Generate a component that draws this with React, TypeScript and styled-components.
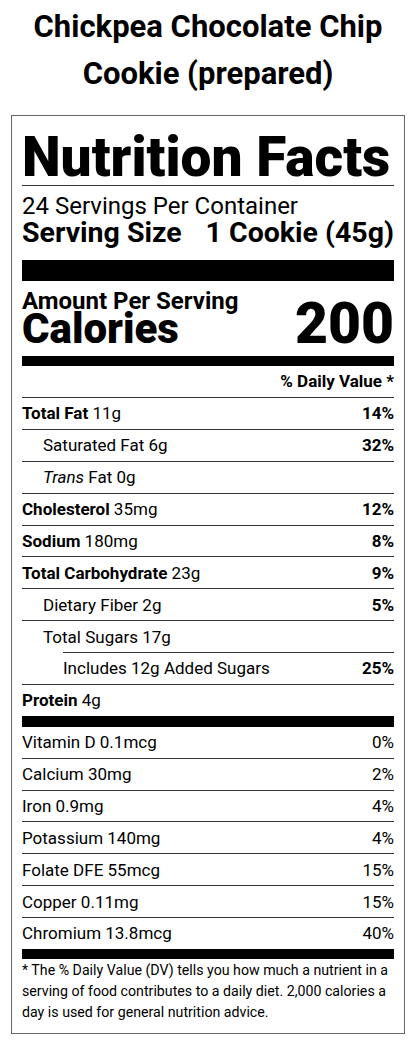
import React from "react";
import styled, { createGlobalStyle } from "styled-components";

const Global = createGlobalStyle`
  html, body { margin: 0; padding: 0; background: #ffffff; }
  body { font-family: Roboto, "Liberation Sans", Arial, sans-serif; color: #000; }
`;

const Page = styled.div`
  width: 416px;
  display: flex;
  flex-direction: column;
  align-items: stretch;
`;

const Title = styled.h1`
  margin: 0;
  padding: 3px 10px 0;
  font-size: 31px;
  line-height: 47px;
  font-weight: 700;
  text-align: center;
`;

const Label = styled.section`
  margin: 18px 11px 0;
  border: 1px solid #666;
  padding: 0 10px 10px;
  display: flex;
  flex-direction: column;
`;

const Heading = styled.h2`
  margin: 0;
  padding-top: 13px;
  font-size: 55px;
  line-height: 56px;
  font-weight: 900;
  border-bottom: 1px solid #333;
`;

const Servings = styled.div`
  font-size: 24px;
  line-height: 26px;
  padding-top: 7px;
`;

const ServingSize = styled.div`
  display: flex;
  justify-content: space-between;
  font-size: 28.5px;
  line-height: 28px;
  font-weight: 700;
`;

const Bar = styled.div<{ $h: number; $mt?: number }>`
  height: ${(p) => p.$h}px;
  background: #000;
  margin-top: ${(p) => p.$mt ?? 0}px;
`;

const CalorieBlock = styled.div`
  display: flex;
  justify-content: space-between;
  align-items: flex-end;
  padding: 8px 0 11px;
`;

const CalorieLeft = styled.div`
  display: flex;
  flex-direction: column;
`;

const Amount = styled.div`
  font-size: 24px;
  line-height: 24px;
  font-weight: 700;
`;

const CaloriesWord = styled.div`
  font-size: 42px;
  line-height: 32px;
  font-weight: 900;
`;

const CaloriesValue = styled.div`
  font-size: 57px;
  line-height: 43px;
  font-weight: 900;
`;

const DVHeader = styled.div`
  text-align: right;
  font-size: 17px;
  font-weight: 700;
  line-height: 24px;
  padding: 3px 0 4px;
  border-bottom: 1px solid #333;
`;

const Row = styled.div<{ $indent?: number; $lineIndent?: number; $noLine?: boolean }>`
  display: flex;
  justify-content: space-between;
  font-size: 17px;
  line-height: 24px;
  padding: 3.45px 0 3.45px ${(p) => p.$indent ?? 0}px;
  margin-left: ${(p) => p.$lineIndent ?? 0}px;
  border-top: ${(p) => (p.$noLine ? "none" : "1px solid #333")};
`;

const Name = styled.span``;

const B = styled.b`
  font-weight: 700;
`;

const I = styled.i`
  font-style: italic;
`;

const Pct = styled.span<{ $bold?: boolean }>`
  font-weight: ${(p) => (p.$bold ? 700 : 400)};
`;

const Footnote = styled.p`
  margin: 0;
  padding-top: 1px;
  font-size: 14.2px;
  line-height: 21px;
`;

type Item = {
  label: React.ReactNode;
  pct?: string;
  bold?: boolean;
  indent?: number;
  lineIndent?: number;
  noLine?: boolean;
};

const macros: Item[] = [
  { label: <><B>Total Fat</B> 11g</>, pct: "14%", bold: true, noLine: true },
  { label: <>Saturated Fat 6g</>, pct: "32%", bold: true, indent: 21 },
  { label: <><I>Trans</I> Fat 0g</>, indent: 21 },
  { label: <><B>Cholesterol</B> 35mg</>, pct: "12%", bold: true },
  { label: <><B>Sodium</B> 180mg</>, pct: "8%", bold: true },
  { label: <><B>Total Carbohydrate</B> 23g</>, pct: "9%", bold: true },
  { label: <>Dietary Fiber 2g</>, pct: "5%", bold: true, indent: 21 },
  { label: <>Total Sugars 17g</>, indent: 21 },
  { label: <>Includes 12g Added Sugars</>, pct: "25%", bold: true, lineIndent: 41 },
  { label: <><B>Protein</B> 4g</> },
];

const micros: Item[] = [
  { label: "Vitamin D 0.1mcg", pct: "0%", noLine: true },
  { label: "Calcium 30mg", pct: "2%" },
  { label: "Iron 0.9mg", pct: "4%" },
  { label: "Potassium 140mg", pct: "4%" },
  { label: "Folate DFE 55mcg", pct: "15%" },
  { label: "Copper 0.11mg", pct: "15%" },
  { label: "Chromium 13.8mcg", pct: "40%" },
];

const renderRow = (it: Item, i: number) => (
  <Row key={i} $indent={it.indent} $lineIndent={it.lineIndent} $noLine={it.noLine}>
    <Name>{it.label}</Name>
    {it.pct && <Pct $bold={it.bold}>{it.pct}</Pct>}
  </Row>
);

export default function App() {
  return (
    <Page>
      <Global />
      <Title>Chickpea Chocolate Chip Cookie (prepared)</Title>
      <Label>
        <Heading>Nutrition Facts</Heading>
        <Servings>24 Servings Per Container</Servings>
        <ServingSize>
          <span>Serving Size</span>
          <span>1 Cookie (45g)</span>
        </ServingSize>
        <Bar $h={21} $mt={13} />
        <CalorieBlock>
          <CalorieLeft>
            <Amount>Amount Per Serving</Amount>
            <CaloriesWord>Calories</CaloriesWord>
          </CalorieLeft>
          <CaloriesValue>200</CaloriesValue>
        </CalorieBlock>
        <Bar $h={10} />
        <DVHeader>% Daily Value *</DVHeader>
        {macros.map(renderRow)}
        <Bar $h={11} />
        {micros.map(renderRow)}
        <Bar $h={10} />
        <Footnote>
          * The % Daily Value (DV) tells you how much a nutrient in a serving of food
          contributes to a daily diet. 2,000 calories a day is used for general nutrition
          advice.
        </Footnote>
      </Label>
    </Page>
  );
}
